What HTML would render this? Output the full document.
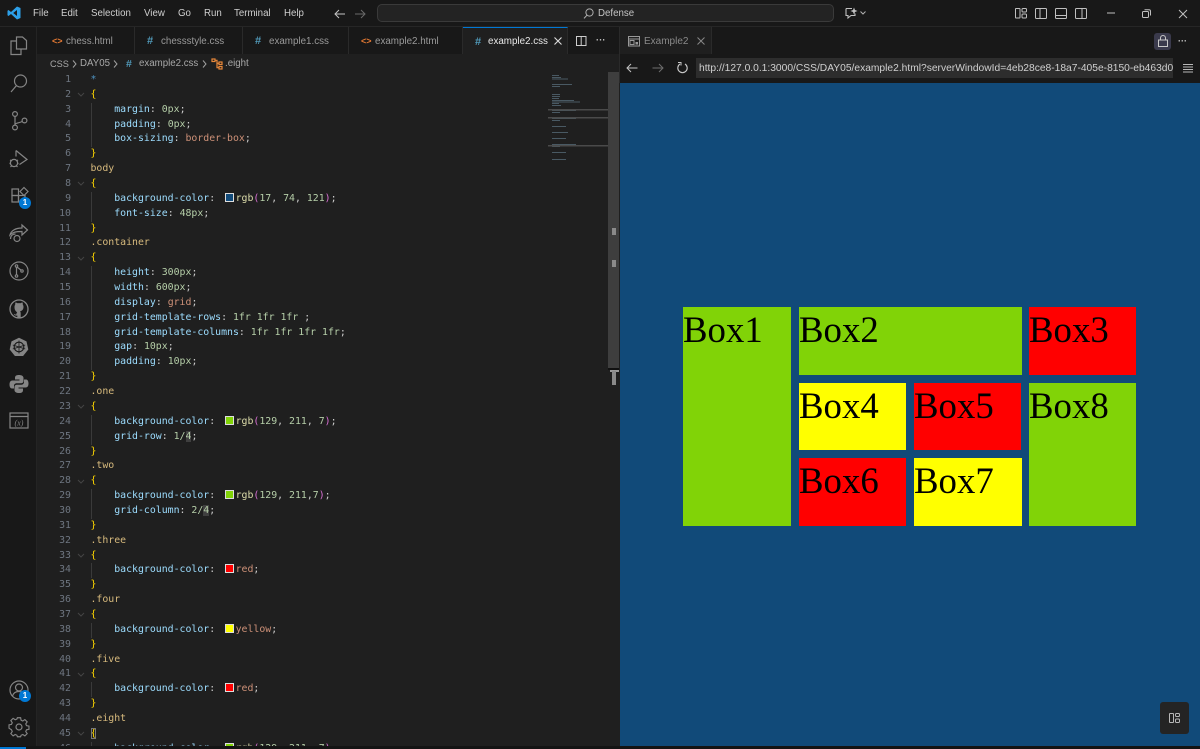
<!DOCTYPE html>
<html><head><meta charset="utf-8"><style>
html,body{margin:0;padding:0;width:1200px;height:749px;overflow:hidden;background:#181818}
*{box-sizing:border-box}
.a{position:absolute}
body{font-family:"Liberation Sans",sans-serif;font-size:9.7px;color:#ccc;position:relative}
.m{position:absolute;top:8px;line-height:14px;color:#cfcfcf}
.tab{position:absolute;top:27px;height:27px;background:#181818;border-right:1px solid #2a2a2a;line-height:29px;color:#9a9a9a;font-size:9.8px}
.tab i{font-style:normal;position:absolute;top:0;font-weight:bold;font-size:11px}
.tab span{position:absolute;top:0;white-space:nowrap}
#code{position:absolute;left:0;top:73px;width:548px;height:673px;overflow:hidden;font-family:"DejaVu Sans Mono",monospace;font-size:9.87px}
.l{position:absolute;height:14.86px;line-height:14.86px;white-space:pre;left:90.5px;color:#ccc}
.n{position:absolute;width:30px;left:41px;text-align:right;height:14.86px;line-height:14.86px;color:#6e7681;font-size:9.87px}
.p{color:#9cdcfe}.v{color:#b5cea8}.s{color:#ce9178}.b{color:#ffd700}.k{color:#d7ba7d}.q{color:#da70d6}
.f{color:#dcdcaa}
.sw{display:inline-block;width:9px;height:9px;border:1px solid #ddd;margin:0 2px 0 3.5px;vertical-align:-1px}
.g{position:absolute;left:91px;width:1px;background:#3a3a3a}
.box{position:absolute;font-family:"Liberation Serif",serif;font-size:36.8px;line-height:45px;color:#000;white-space:nowrap}
svg{position:absolute;overflow:visible}
svg.i *{fill:none;stroke:#858585;stroke-width:1.2}
</style></head><body>

<!-- title bar -->
<div class="a" style="left:0;top:0;width:1200px;height:27px;background:#181818;border-bottom:1px solid #262626"></div>
<svg style="left:7px;top:6px" width="14" height="14" viewBox="0 0 14 14"><path d="M10 0.5 L13.5 2 V12 L10 13.5 L4 8 L1.5 10 L0.5 9.3 V4.7 L1.5 4 L4 6 Z M10 4 L6.2 7 L10 10 Z" fill="#2c9fe8" fill-rule="evenodd"/></svg>
<div class="m" style="left:33px;top:7px">File</div>
<div class="m" style="left:61px;top:7px">Edit</div>
<div class="m" style="left:91px;top:7px">Selection</div>
<div class="m" style="left:144px;top:7px">View</div>
<div class="m" style="left:178px;top:7px">Go</div>
<div class="m" style="left:204px;top:7px">Run</div>
<div class="m" style="left:234px;top:7px">Terminal</div>
<div class="m" style="left:284px;top:7px">Help</div>
<svg width="12" height="10" style="left:334px;top:9px"><path d="M11 5H1M5 1L1 5l4 4" fill="none" stroke="#c4c4c4" stroke-width="1"/></svg>
<svg width="12" height="10" style="left:354px;top:9px"><path d="M1 5h10M7 1l4 4-4 4" fill="none" stroke="#6a6a6a" stroke-width="1"/></svg>
<div class="a" style="left:377px;top:4px;width:457px;height:18px;background:#232323;border:1px solid #3a3a3a;border-radius:5px"></div>
<svg width="11" height="11" style="left:583px;top:8px"><circle cx="6.5" cy="4.5" r="3.6" fill="none" stroke="#b0b0b0"/><path d="M4 7.2L1 10.4" stroke="#b0b0b0" fill="none"/></svg>
<div class="a" style="left:598px;top:7px;line-height:14px;color:#c4c4c4">Defense</div>
<svg width="22" height="12" style="left:845px;top:7px"><path d="M1 1.5h6M1 1.5v7h2v2.500l3-2.500h4v-2" fill="none" stroke="#c0c0c0" stroke-width="1.100"/><path d="M9 0.500l1 2.500 2.500 1-2.500 1-1 2.500-1-2.500-2.500-1 2.500-1z" fill="#c0c0c0"/><path d="M15.500 4.500l2.500 2.500 2.500-2.500" fill="none" stroke="#b0b0b0"/></svg>
<svg width="12" height="12" style="left:1015px;top:8px"><g fill="none" stroke="#c0c0c0"><rect x=".5" y=".5" width="4.500" height="9.500" rx=".5"/><rect x="7" y=".5" width="4.500" height="3.500" rx="1"/><rect x="7" y="6" width="4.500" height="4" rx="1"/></g></svg>
<svg width="12" height="12" style="left:1035px;top:8px"><g fill="none" stroke="#c0c0c0"><rect x=".5" y=".5" width="11" height="10" rx="1"/><path d="M5 .5v10"/></g></svg>
<svg width="12" height="12" style="left:1055px;top:8px"><g fill="none" stroke="#c0c0c0"><rect x=".5" y=".5" width="11" height="10" rx="1"/><path d="M.5 7.500h11"/></g></svg>
<svg width="12" height="12" style="left:1075px;top:8px"><g fill="none" stroke="#c0c0c0"><rect x=".5" y=".5" width="11" height="10" rx="1"/><path d="M7 .5v10"/></g></svg>
<svg width="10" height="2" style="left:1106px;top:12px"><path d="M1 1h8" stroke="#c0c0c0" fill="none"/></svg>
<svg width="10" height="10" style="left:1142px;top:9px"><g fill="none" stroke="#c0c0c0"><rect x=".5" y="2.500" width="6" height="6" rx="1"/><path d="M2.500 .7h4.500a1.500 1.500 0 0 1 1.500 1.500v4.300"/></g></svg>
<svg width="10" height="10" style="left:1178px;top:9px"><path d="M1 1l8 8M9 1l-8 8" stroke="#c0c0c0" fill="none"/></svg>

<!-- activity bar -->
<div class="a" style="left:0;top:27px;width:37px;height:720px;background:#181818;border-right:1px solid #242424"></div>
<svg class="i" width="18" height="20" style="left:10px;top:36px" viewBox="0 0 18 20"><path d="M6.500 1h6l4 3.500V13h-10z"/><path d="M6.500 5H1v13.500h10V13"/></svg>
<svg class="i" width="18" height="20" style="left:10px;top:74px" viewBox="0 0 18 20"><circle cx="10.500" cy="7" r="6"/><path d="M6.500 11.500L1 18" stroke-width="1.500"/></svg>
<svg class="i" width="18" height="20" style="left:11px;top:111px" viewBox="0 0 18 20"><circle cx="4" cy="3" r="2.400"/><circle cx="4" cy="16.500" r="2.400"/><circle cx="13.500" cy="9.500" r="2.400"/><path d="M4 5.500v8.500M11.200 10.500C8 12 5.500 12 4 13"/></svg>
<svg class="i" width="20" height="20" style="left:9px;top:149px" viewBox="0 0 20 20"><path d="M7 1.500l11 9-7.500 5"/><path d="M7 1.500v6"/><circle cx="5" cy="14" r="3.600"/><path d="M1 11l1.800 1M9 11l-1.800 1M.5 14.500h1M8.500 14.500h1M1.500 18l1.500-1.500M8.500 18L7 16.500"/></svg>
<svg class="i" width="20" height="20" style="left:11px;top:187px" viewBox="0 0 20 20"><rect x="1" y="2" width="6.500" height="6.500"/><rect x="1" y="8.500" width="6.500" height="6.500"/><rect x="7.500" y="8.500" width="6.500" height="6.500"/><path d="M13 .5l4 4-4 4-4-4z"/></svg>
<div class="a" style="left:19px;top:197px;width:12px;height:12px;border-radius:6px;background:#0078d4;color:#fff;font-size:8px;font-weight:bold;line-height:12px;text-align:center">1</div>
<svg class="i" width="20" height="20" style="left:9px;top:223px" viewBox="0 0 20 20"><path d="M18.500 7L13 2v3C6 5 2 8 1 12c3-3 6-3.500 12-3.500V12z"/><path d="M1.500 16c0-4 3-5 5-5"/><circle cx="8" cy="15.500" r="3"/></svg>
<svg class="i" width="20" height="20" style="left:9px;top:261px" viewBox="0 0 20 20"><circle cx="10" cy="10" r="9"/><circle cx="7.500" cy="5" r="1.200"/><circle cx="7.500" cy="15" r="1.200"/><circle cx="13" cy="10" r="1.200"/><path d="M7.500 6v8M8 6l4.500 3.500"/></svg>
<svg width="20" height="20" style="left:9px;top:299px" viewBox="0 0 20 20"><circle cx="10" cy="10" r="9" fill="none" stroke="#858585" stroke-width="1.300"/><path d="M5.500 8c0-1 .3-2 .8-2.800C6 4 6.500 3.500 6.500 3.500c1 0 2 .8 2 .8a6 6 0 0 1 3 0s1-.8 2-.8c0 0 .5.500.2 1.700.5.800.8 1.800.8 2.800 0 3-2 4-3.500 4.200.5.500.7 1 .7 2v4.500H8.300v-2.200c-2 .4-3-.6-3.600-1.800 1 .2 1.700 1 2.500.9.300-1.300.6-1.700 1-2.300C6.500 12 5.500 11 5.500 8z" fill="#858585"/></svg>
<svg width="20" height="20" style="left:9px;top:337px" viewBox="0 0 20 20"><path d="M10 .8l7.500 3.600 1.800 8.100-5.200 6.500H5.900L.7 12.500l1.800-8.100z" fill="#858585"/><circle cx="10" cy="10" r="4.800" fill="none" stroke="#181818" stroke-width="1.100"/><path d="M10 3.500v13M3.800 8l12.400 4M16.200 8L3.800 12" stroke="#181818" stroke-width=".8" fill="none"/></svg>
<svg width="20" height="20" style="left:9px;top:374px" viewBox="0 0 20 20"><path d="M10 1C7 1 6 2 6 4v1.500h4.500v1H3.500C1.500 6.500.5 8 .5 10.500s1 4 2.500 4H5V12c0-1.500 1-2.700 2.700-2.700h4.500c1.300 0 2.300-1 2.300-2.300V4c0-2-2-3-4.500-3z" fill="#858585"/><path d="M10 19c3 0 4-1 4-3v-1.500H9.500v-1h7c2 0 3-1.500 3-4s-1-4-2.500-4H15V8c0 1.500-1 2.700-2.700 2.700H7.800c-1.300 0-2.300 1-2.300 2.300v3c0 2 2 3 4.500 3z" fill="#858585"/></svg>
<svg class="i" width="20" height="18" style="left:9px;top:412px" viewBox="0 0 20 18"><rect x="1" y="1" width="18" height="15"/><path d="M1 4.500h18"/><text x="10" y="13.500" text-anchor="middle" font-family="Liberation Serif,serif" font-style="italic" font-size="8" style="fill:#858585;stroke:none">(x)</text></svg>
<svg class="i" width="20" height="20" style="left:9px;top:680px" viewBox="0 0 20 20"><circle cx="10" cy="10" r="9"/><circle cx="10" cy="7.500" r="3.500"/><path d="M3.500 16c1-3.500 3.500-4.500 6.500-4.500s5.500 1 6.500 4.500"/></svg>
<div class="a" style="left:19px;top:690px;width:12px;height:12px;border-radius:6px;background:#0078d4;color:#fff;font-size:8px;font-weight:bold;line-height:12px;text-align:center">1</div>
<svg class="i" width="20" height="20" style="left:9px;top:717px" viewBox="0 0 20 20"><path d="M8.300 1h3.400l.5 2.600 1.800.8 2.200-1.500 2.400 2.400-1.500 2.200.8 1.800 2.600.5v3.400l-2.600.5-.8 1.800 1.500 2.200-2.400 2.400-2.200-1.500-1.800.8-.5 1.600H8.300l-.5-1.600-1.800-.8-2.200 1.500-2.400-2.400 1.500-2.200-.8-1.800L-.5 12V8.500l2.600-.5.800-1.800L1.400 4l2.400-2.400L6 3.100l1.800-.7z" transform="translate(.5 -.2) scale(.95)"/><circle cx="10" cy="10" r="3"/></svg>

<!-- tabs -->
<div class="a" style="left:37px;top:27px;width:583px;height:27px;background:#181818"></div>
<div class="tab" style="left:40px;width:95px"><i style="left:12px;color:#e37933;font-size:9px">&lt;&gt;</i><span style="left:26px">chess.html</span></div>
<div class="tab" style="left:135px;width:108px"><i style="left:12px;color:#519aba">#</i><span style="left:26px">chessstyle.css</span></div>
<div class="tab" style="left:243px;width:106px"><i style="left:12px;color:#519aba">#</i><span style="left:26px">example1.css</span></div>
<div class="tab" style="left:349px;width:114px"><i style="left:12px;color:#e37933;font-size:9px">&lt;&gt;</i><span style="left:26px">example2.html</span></div>
<div class="tab" style="left:463px;width:105px;background:#1f1f1f;border-top:1px solid #0078d4;color:#e8e8e8;line-height:28px"><i style="left:12px;color:#519aba">#</i><span style="left:25px">example2.css</span></div>
<svg width="8" height="8" style="left:554px;top:37px"><path d="M.5.5l7 7M7.500.5l-7 7" stroke="#ddd" stroke-width="1.100" fill="none"/></svg>
<svg width="11" height="10" style="left:576px;top:36px"><rect x=".5" y=".5" width="9.500" height="9" fill="none" stroke="#ccc"/><path d="M5.200.5v9" stroke="#ccc" fill="none"/></svg>
<div class="a" style="left:596px;top:37px;width:10px;height:8px;color:#ccc;font-size:9px;line-height:6px;letter-spacing:.2px;font-weight:bold">&middot;&middot;&middot;</div>

<!-- breadcrumb + editor -->
<div class="a" style="left:37px;top:54px;width:583px;height:692px;background:#1f1f1f"></div>
<div class="a" style="left:50px;top:57px;line-height:14px;color:#a8a8a8;white-space:nowrap;font-size:9.2px">CSS</div>
<svg width="5" height="8" style="left:72px;top:60px"><path d="M1 .5l3 3.500-3 3.500" stroke="#a0a0a0" fill="none"/></svg>
<div class="a" style="left:80px;top:57px;line-height:14px;color:#a8a8a8">DAY05</div>
<svg width="5" height="8" style="left:113px;top:60px"><path d="M1 .5l3 3.500-3 3.500" stroke="#a0a0a0" fill="none"/></svg>
<div class="a" style="left:126px;top:57px;line-height:14px;color:#519aba;font-weight:bold;font-size:10.500px">#</div>
<div class="a" style="left:139px;top:57px;line-height:14px;color:#a8a8a8">example2.css</div>
<svg width="5" height="8" style="left:202px;top:60px"><path d="M1 .5l3 3.500-3 3.500" stroke="#a0a0a0" fill="none"/></svg>
<svg width="12" height="12" style="left:211px;top:58px"><g fill="none" stroke="#e8883a" stroke-width="1.200"><rect x="1" y="1" width="3" height="2.500"/><rect x="8" y="4" width="3" height="2.500"/><rect x="8" y="8.500" width="3" height="2.500"/><path d="M4 2.300h2v7.400h2M6 5.300h2"/></g></svg>
<div class="a" style="left:225px;top:57px;line-height:14px;color:#a8a8a8">.eight</div>

<div id="code">
<div class="g" style="top:30px;height:44px"></div>
<div class="g" style="top:119px;height:30px"></div>
<div class="g" style="top:193px;height:104px"></div>
<div class="g" style="top:342px;height:30px"></div>
<div class="g" style="top:416px;height:30px"></div>
<div class="g" style="top:490px;height:15px"></div>
<div class="g" style="top:550px;height:15px"></div>
<div class="g" style="top:609px;height:15px"></div>
<div class="g" style="top:669px;height:15px"></div>
<svg width="9" height="700" style="left:77px;top:0"><g fill="none" stroke="#444"><path d="M1 20l3 3 3-3M1 109l3 3 3-3M1 184l3 3 3-3M1 332l3 3 3-3M1 407l3 3 3-3M1 481l3 3 3-3M1 540l3 3 3-3M1 600l3 3 3-3M1 659l3 3 3-3"/></g></svg>

<div class="n" style="top:0px">1</div><div class="l" style="top:0px"><span class="p" style="color:#4f93c2">*</span></div>
<div class="n" style="top:14.860px">2</div><div class="l" style="top:14.860px"><span class="b">{</span></div>
<div class="n" style="top:29.720px">3</div><div class="l" style="top:29.720px">    <span class="p">margin</span>: <span class="v">0px</span>;</div>
<div class="n" style="top:44.580px">4</div><div class="l" style="top:44.580px">    <span class="p">padding</span>: <span class="v">0px</span>;</div>
<div class="n" style="top:59.440px">5</div><div class="l" style="top:59.440px">    <span class="p">box-sizing</span>: <span class="s">border-box</span>;</div>
<div class="n" style="top:74.300px">6</div><div class="l" style="top:74.300px"><span class="b">}</span></div>
<div class="n" style="top:89.160px">7</div><div class="l" style="top:89.160px"><span class="k">body</span></div>
<div class="n" style="top:104.020px">8</div><div class="l" style="top:104.020px"><span class="b">{</span></div>
<div class="n" style="top:118.880px">9</div><div class="l" style="top:118.880px">    <span class="p">background-color</span>: <span class="sw" style="background:#114a79"></span><span class="f">rgb</span><span class="q">(</span><span class="v">17</span>, <span class="v">74</span>, <span class="v">121</span><span class="q">)</span>;</div>
<div class="n" style="top:133.740px">10</div><div class="l" style="top:133.740px">    <span class="p">font-size</span>: <span class="v">48px</span>;</div>
<div class="n" style="top:148.600px">11</div><div class="l" style="top:148.600px"><span class="b">}</span></div>
<div class="n" style="top:163.460px">12</div><div class="l" style="top:163.460px"><span class="k">.container</span></div>
<div class="n" style="top:178.320px">13</div><div class="l" style="top:178.320px"><span class="b">{</span></div>
<div class="n" style="top:193.180px">14</div><div class="l" style="top:193.180px">    <span class="p">height</span>: <span class="v">300px</span>;</div>
<div class="n" style="top:208.040px">15</div><div class="l" style="top:208.040px">    <span class="p">width</span>: <span class="v">600px</span>;</div>
<div class="n" style="top:222.900px">16</div><div class="l" style="top:222.900px">    <span class="p">display</span>: <span class="s">grid</span>;</div>
<div class="n" style="top:237.760px">17</div><div class="l" style="top:237.760px">    <span class="p">grid-template-rows</span>: <span class="v">1fr</span> <span class="v">1fr</span> <span class="v">1fr</span> ;</div>
<div class="n" style="top:252.620px">18</div><div class="l" style="top:252.620px">    <span class="p">grid-template-columns</span>: <span class="v">1fr</span> <span class="v">1fr</span> <span class="v">1fr</span> <span class="v">1fr</span>;</div>
<div class="n" style="top:267.480px">19</div><div class="l" style="top:267.480px">    <span class="p">gap</span>: <span class="v">10px</span>;</div>
<div class="n" style="top:282.340px">20</div><div class="l" style="top:282.340px">    <span class="p">padding</span>: <span class="v">10px</span>;</div>
<div class="n" style="top:297.200px">21</div><div class="l" style="top:297.200px"><span class="b">}</span></div>
<div class="n" style="top:312.060px">22</div><div class="l" style="top:312.060px"><span class="k">.one</span></div>
<div class="n" style="top:326.920px">23</div><div class="l" style="top:326.920px"><span class="b">{</span></div>
<div class="n" style="top:341.780px">24</div><div class="l" style="top:341.780px">    <span class="p">background-color</span>: <span class="sw" style="background:#81d307"></span><span class="f">rgb</span><span class="q">(</span><span class="v">129</span>, <span class="v">211</span>, <span class="v">7</span><span class="q">)</span>;</div>
<div class="n" style="top:356.640px">25</div><div class="l" style="top:356.640px">    <span class="p">grid-row</span>: <span class="v">1/</span><span class="v" style="background:#3f3f3f">4</span>;</div>
<div class="n" style="top:371.500px">26</div><div class="l" style="top:371.500px"><span class="b">}</span></div>
<div class="n" style="top:386.360px">27</div><div class="l" style="top:386.360px"><span class="k">.two</span></div>
<div class="n" style="top:401.220px">28</div><div class="l" style="top:401.220px"><span class="b">{</span></div>
<div class="n" style="top:416.080px">29</div><div class="l" style="top:416.080px">    <span class="p">background-color</span>: <span class="sw" style="background:#81d307"></span><span class="f">rgb</span><span class="q">(</span><span class="v">129</span>, <span class="v">211</span>,<span class="v">7</span><span class="q">)</span>;</div>
<div class="n" style="top:430.940px">30</div><div class="l" style="top:430.940px">    <span class="p">grid-column</span>: <span class="v">2/</span><span class="v" style="background:#3f3f3f">4</span>;</div>
<div class="n" style="top:445.800px">31</div><div class="l" style="top:445.800px"><span class="b">}</span></div>
<div class="n" style="top:460.660px">32</div><div class="l" style="top:460.660px"><span class="k">.three</span></div>
<div class="n" style="top:475.520px">33</div><div class="l" style="top:475.520px"><span class="b">{</span></div>
<div class="n" style="top:490.380px">34</div><div class="l" style="top:490.380px">    <span class="p">background-color</span>: <span class="sw" style="background:#f00"></span><span class="s">red</span>;</div>
<div class="n" style="top:505.240px">35</div><div class="l" style="top:505.240px"><span class="b">}</span></div>
<div class="n" style="top:520.100px">36</div><div class="l" style="top:520.100px"><span class="k">.four</span></div>
<div class="n" style="top:534.960px">37</div><div class="l" style="top:534.960px"><span class="b">{</span></div>
<div class="n" style="top:549.820px">38</div><div class="l" style="top:549.820px">    <span class="p">background-color</span>: <span class="sw" style="background:#ff0"></span><span class="s">yellow</span>;</div>
<div class="n" style="top:564.680px">39</div><div class="l" style="top:564.680px"><span class="b">}</span></div>
<div class="n" style="top:579.540px">40</div><div class="l" style="top:579.540px"><span class="k">.five</span></div>
<div class="n" style="top:594.400px">41</div><div class="l" style="top:594.400px"><span class="b">{</span></div>
<div class="n" style="top:609.260px">42</div><div class="l" style="top:609.260px">    <span class="p">background-color</span>: <span class="sw" style="background:#f00"></span><span class="s">red</span>;</div>
<div class="n" style="top:624.120px">43</div><div class="l" style="top:624.120px"><span class="b">}</span></div>
<div class="n" style="top:638.980px">44</div><div class="l" style="top:638.980px"><span class="k">.eight</span></div>
<div class="n" style="top:653.840px">45</div><div class="l" style="top:653.840px"><span class="b" style="outline:1px solid #777;outline-offset:-1px">{</span></div>
<div class="n" style="top:668.700px">46</div><div class="l" style="top:668.700px">    <span class="p">background-color</span>: <span class="sw" style="background:#81d307"></span><span class="f">rgb</span><span class="q">(</span><span class="v">129</span>, <span class="v">211</span>, <span class="v">7</span><span class="q">)</span>;</div>
</div>

<!-- minimap -->
<svg width="60" height="100" style="left:548px;top:72px">
<g fill="#6d8a9c" opacity=".55">
<rect x="4" y="3" width="7" height="1"/><rect x="4" y="5" width="9" height="1"/><rect x="4" y="6.500" width="16" height="1"/><rect x="4" y="12" width="20" height="1"/><rect x="4" y="14" width="8" height="1"/>
<rect x="4" y="22" width="8" height="1"/><rect x="4" y="24" width="8" height="1"/><rect x="4" y="26" width="7" height="1"/><rect x="4" y="28" width="22" height="1"/><rect x="4" y="29.500" width="28" height="1"/><rect x="4" y="31" width="7" height="1"/><rect x="4" y="33" width="9" height="1"/>
<rect x="4" y="38" width="24" height="1"/><rect x="4" y="40" width="8" height="1"/><rect x="4" y="46" width="24" height="1"/><rect x="4" y="48" width="8" height="1"/><rect x="4" y="54" width="14" height="1"/><rect x="4" y="60" width="16" height="1"/><rect x="4" y="66" width="14" height="1"/><rect x="4" y="72" width="24" height="1"/><rect x="4" y="74" width="8" height="1"/><rect x="4" y="80" width="14" height="1"/><rect x="4" y="87" width="14" height="1"/>
</g>
<rect x="0" y="37" width="60" height="1.500" fill="#4a4a4a"/><rect x="0" y="45" width="60" height="1.500" fill="#4a4a4a"/><rect x="0" y="73" width="60" height="1.500" fill="#4a4a4a"/>
</svg>
<!-- scrollbar -->
<div class="a" style="left:608px;top:72px;width:11px;height:296px;background:#3e3e3e"></div>
<div class="a" style="left:612px;top:228px;width:4px;height:7px;background:#8a8a8a"></div>
<div class="a" style="left:612px;top:260px;width:4px;height:7px;background:#8a8a8a"></div>
<div class="a" style="left:608px;top:368px;width:11px;height:2px;background:#111"></div>
<div class="a" style="left:610px;top:370px;width:9px;height:2px;background:#9a9a9a"></div>
<div class="a" style="left:612px;top:371px;width:4px;height:14px;background:#8a8a8a"></div>

<!-- preview pane -->
<div class="a" style="left:619px;top:27px;width:581px;height:56px;background:#181818;border-left:1px solid #2a2a2a"></div>
<div class="a" style="left:620px;top:27px;width:92px;height:27px;background:#1f1f1f;border-right:1px solid #2a2a2a"></div>
<svg width="12" height="11" style="left:628px;top:36px"><rect x=".5" y=".5" width="11" height="9.500" fill="none" stroke="#999"/><path d="M.5 3h11" stroke="#999" fill="none"/><rect x="2" y="4.500" width="4" height="4" fill="none" stroke="#999"/><rect x="7.500" y="6" width="2.500" height="2.500" fill="#999"/></svg>
<div class="a" style="left:644px;top:35px;line-height:14px;color:#8a8a8a;font-size:10px">Example2</div>
<svg width="8" height="8" style="left:697px;top:37px"><path d="M.5.5l7 7M7.500.5l-7 7" stroke="#888" fill="none"/></svg>
<div class="a" style="left:1154px;top:33px;width:17px;height:17px;background:#3a3a4c;border-radius:3px"></div>
<svg width="10" height="12" style="left:1158px;top:35px"><rect x=".5" y="5" width="9" height="6.500" fill="none" stroke="#c8c8c8"/><path d="M2.500 5V3a2.500 2.500 0 0 1 5 0v2" fill="none" stroke="#c8c8c8"/></svg>
<div class="a" style="left:1178px;top:37px;color:#ccc;font-size:9px;line-height:8px;font-weight:bold">&middot;&middot;&middot;</div>
<svg width="12" height="10" style="left:626px;top:63px"><path d="M11.500 5H1M5 1L1 5l4 4" fill="none" stroke="#c4c4c4"/></svg>
<svg width="12" height="10" style="left:652px;top:63px"><path d="M.5 5H11M7 1l4 4-4 4" fill="none" stroke="#6e6e6e"/></svg>
<svg width="11" height="11" style="left:677px;top:62px"><path d="M3 2A4.700 4.700 0 1 0 8 2" fill="none" stroke="#c8c8c8" stroke-width="1.100"/><path d="M1 .5h3v3" fill="none" stroke="#c8c8c8"/></svg>
<div class="a" style="left:696px;top:58px;width:477px;height:20px;background:#2d2d2d;color:#d0d0d0;padding-left:3px;line-height:21px;font-size:10.25px;white-space:nowrap;overflow:hidden">http://127.0.0.1:3000/CSS/DAY05/example2.html?serverWindowId=4eb28ce8-18a7-405e-8150-eb463d0c</div>
<svg width="10" height="8" style="left:1183px;top:64px"><path d="M0 .5h10M0 3h10M0 5.500h10M0 8h10" stroke="#b8b8b8" fill="none" stroke-width=".9"/></svg>

<!-- page -->
<div class="a" style="left:620px;top:83px;width:580px;height:663px;background:#114a79"></div>
<div class="box" style="left:683px;top:307px;width:108px;height:219px;background:#81d307">Box1</div>
<div class="box" style="left:799px;top:307px;width:223px;height:68px;background:#81d307">Box2</div>
<div class="box" style="left:1029px;top:307px;width:107px;height:68px;background:#f00">Box3</div>
<div class="box" style="left:799px;top:383px;width:107px;height:67px;background:#ff0">Box4</div>
<div class="box" style="left:914px;top:383px;width:107px;height:67px;background:#f00">Box5</div>
<div class="box" style="left:799px;top:458px;width:107px;height:68px;background:#f00">Box6</div>
<div class="box" style="left:914px;top:458px;width:108px;height:68px;background:#ff0">Box7</div>
<div class="box" style="left:1029px;top:383px;width:107px;height:143px;background:#81d307">Box8</div>
<div class="a" style="left:1160px;top:702px;width:29px;height:32px;background:#242424;border-radius:3px"></div>
<svg width="12" height="12" style="left:1169px;top:713px"><g fill="none" stroke="#b8b8b8"><rect x=".5" y=".5" width="4" height="9" rx=".5"/><rect x="6.500" y=".5" width="4" height="3" rx="1"/><rect x="6.500" y="6" width="4" height="3.500" rx="1"/></g></svg>

<!-- bottom -->
<div class="a" style="left:0;top:746px;width:1200px;height:3px;background:#141414"></div>
<div class="a" style="left:0;top:747px;width:26px;height:2px;background:#0078d4"></div>
</body></html>
